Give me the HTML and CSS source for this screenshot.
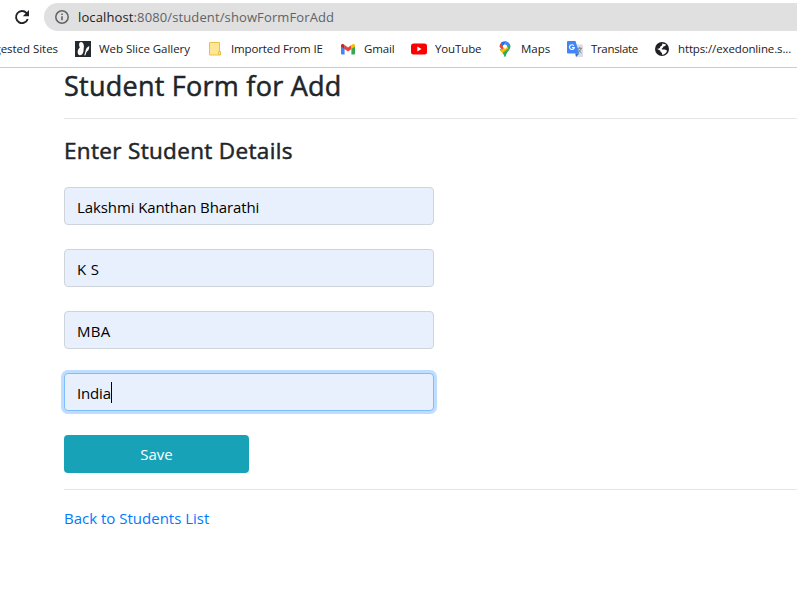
FILE: index.html
```html
<!DOCTYPE html>
<html lang="en">
<head>
<meta charset="utf-8">
<title>Student Form</title>
<link rel="stylesheet" href="styles.css">
</head>
<body>
<header class="browser">
  <div class="toolbar">
    <svg class="reload" viewBox="0 0 16 16"><path d="M13.700 10A6 6 0 1 1 12.600 4.200" fill="none" stroke="#202124" stroke-width="1.900"/><path d="M15 1v6.200H8.800z" fill="#202124"/></svg>
    <div class="address">
      <svg class="info" viewBox="0 0 16 16"><circle cx="8" cy="8" r="6.200" fill="none" stroke="#5f6368" stroke-width="1.500"/><path d="M8 7.200v4M8 4.500v1.600" stroke="#5f6368" stroke-width="1.600"/></svg>
      <span class="url"><span class="host">localhost</span>:8080/student/showFormForAdd</span>
    </div>
  </div>
  <nav class="bookmarks">
    <div class="bookmark clipped"><span>gested Sites</span></div>
    <div class="bookmark">
      <svg viewBox="0 0 16 16"><path fill="#24292d" d="M0 0h16v16H0z"/><path fill="#fff" d="M6 1C4 1 3.600 4 4.800 6.500 2 9 2 13.500 4.500 14.200c2.800.4 4.300-2.700 4.100-6.200C9.500 5 8.700 1.200 6 1zM14.200 5c-2.200 1-3.400 2.800-3.800 5.500L9.300 14.300l1 .2 1.200-3.500C13.500 9.700 14.600 7.500 14.200 5z"/></svg>
      <span>Web Slice Gallery</span>
    </div>
    <div class="bookmark">
      <svg viewBox="0 0 16 16"><path fill="#ffe694" stroke="#e8c34a" d="M2.500 1.500h10v8.500l1 1v3h-11z"/><path fill="#ffe694" stroke="#e8c34a" d="M11.500 10.500h2v3h-2z"/></svg>
      <span class="tight">Imported From IE</span>
    </div>
    <div class="bookmark">
      <svg viewBox="0 0 16 16"><path fill="#4285f4" d="M1 5l3.600 2.300v6.200H2a1 1 0 0 1-1-1z"/><path fill="#34a853" d="M15 5l-3.600 2.300v6.200H14a1 1 0 0 0 1-1z"/><path fill="#ea4335" d="M4.600 4L8 6.500 11.400 4v4L8 10.500 4.600 8z"/><path fill="#c5221f" d="M1 4.700C1 2.900 2.900 2.600 4.600 4v4L1 5.500z"/><path fill="#fbbc04" d="M15 4.700c0-1.800-1.900-2.100-3.600-.7v4L15 5.500z"/></svg>
      <span class="tight">Gmail</span>
    </div>
    <div class="bookmark">
      <svg viewBox="0 0 16 16"><rect y="2.500" width="16" height="11" rx="2.500" fill="#f00"/><path d="M6.300 5.600v4.800L10.500 8z" fill="#fff"/></svg>
      <span class="tight">YouTube</span>
    </div>
    <div class="bookmark">
      <svg viewBox="0 0 16 16"><path fill="#34a853" d="M2.700 8.500L12.900 3c1 2 .7 4.200-.8 6C10 11.500 9.200 13 8.700 15.300c-.2.900-1.200.9-1.400 0C6.800 12.500 4.500 11 2.700 8.500z"/><path fill="#fbbc04" d="M3 9l7.500-5 .8 3.600L5.500 12z"/><path fill="#ea4335" d="M3.700 2.200L8 6 5 8.500 2.500 5.800c0-1.300.4-2.600 1.200-3.600z"/><path fill="#1a73e8" d="M3.700 2.200C5 .6 7.400-.1 9.600.6L6 5z"/><path fill="#4285f4" d="M9.600.6c1.500.4 2.600 1.300 3.300 2.700L9.500 7 7 4z"/><circle cx="8" cy="5.600" r="2.100" fill="#fff"/></svg>
      <span>Maps</span>
    </div>
    <div class="bookmark">
      <svg viewBox="0 0 16 16"><path fill="#dadce0" d="M6 3.500h9a1 1 0 0 1 1 1V15a1 1 0 0 1-1 1H9z"/><path fill="#4285f4" d="M1 0h7.500l3.800 12.500H1a1 1 0 0 1-1-1V1a1 1 0 0 1 1-1z"/><path fill="#3367d6" d="M8.300 12.500h4L9 16z"/><path d="M6.800 4.600a2.400 2.400 0 1 0 .5 2H5" fill="none" stroke="#fff" stroke-width="1.100"/><path d="M10.500 7.300H15M12.700 6v1.300M14 7.500c-.4 2-1.600 3.200-2.500 4M11.500 8.500c.7 1.500 1.800 2.500 3 3.500" fill="none" stroke="#73808c" stroke-width=".9"/></svg>
      <span class="tighter">Translate</span>
    </div>
    <div class="bookmark">
      <svg viewBox="0 0 16 16"><circle cx="8" cy="8" r="7" fill="#202124"/><path fill="#fff" d="M8.300 2.500l3.700 1c-.3 1.600-1.500 1.600-2.500 2-.7.400-.3 1.600-1.300 1.800-.8.200-.6 1.300.4 1.200h2.200c1 0 1 1.200 2.300 1C12.600 12 10.400 13.700 8 13.700v-2c-1.300 0-1.600-1-1.600-1.900L2.400 7.500C2.700 8 4 7.800 5 7.500c1.500-.3.800-1.700 1.700-2.200.9-.4 1.600-.8 1.600-2.800z"/></svg>
      <span class="tight">https://exedonline.s...</span>
    </div>
  </nav>
</header>
<main class="container">
  <h3>Student Form for Add</h3>
  <hr>
  <h4>Enter Student Details</h4>
  <form>
    <input class="field name" type="text" value="Lakshmi Kanthan Bharathi">
    <input class="field initials" type="text" value="K S">
    <input class="field initials" type="text" value="MBA">
    <div class="field focused"><span>India</span><i class="caret"></i></div>
    <button class="save" type="button">Save</button>
  </form>
  <hr>
  <a class="back" href="#">Back to Students List</a>
</main>
</body>
</html>
```

FILE: styles.css
```css
* { box-sizing: border-box; }
body {
  margin: 0;
  height: 607px;
  overflow: hidden;
  background: #fff;
  color: #212529;
  font: 15px/24px "Open Sans", "Noto Sans", sans-serif;
}
.browser { height: 68px; padding-top: 3px; border-bottom: 1px solid #ccc; }
.toolbar { display: flex; align-items: center; height: 28px; padding-left: 14px; }
.reload { width: 16px; height: 16px; margin-right: 14px; }
.address {
  flex: 1;
  display: flex;
  align-items: center;
  height: 28px;
  padding-left: 10px;
  border-radius: 14px 0 0 14px;
  background: #e0e0e0;
}
.info { width: 16px; height: 16px; margin-right: 8px; }
.url { font-size: 13px; letter-spacing: .12px; color: #5f6368; white-space: nowrap; }
.host { color: #202124; }
.bookmarks {
  display: grid;
  grid-template-columns: 75px 132px 133px 71px 86px 70px 87px 1fr;
  height: 36px;
}
.bookmark {
  display: flex;
  align-items: center;
  gap: 8px;
  font-size: 11.500px;
  letter-spacing: -.04px;
  color: #202124;
  white-space: nowrap;
}
.tight { letter-spacing: -.13px; }
.tighter { letter-spacing: -.33px; }
.bookmark svg { flex: none; width: 16px; height: 16px; }
.clipped { justify-content: flex-end; padding-right: 17px; }
.container { padding-left: 64px; }
h3, h4 { margin: 0; font-weight: 400; white-space: nowrap; -webkit-text-stroke: .5px #212529; }
h3 { height: 50px; font-size: 27px; line-height: 35px; letter-spacing: .25px; }
h4 { height: 68px; font-size: 22.500px; line-height: 30px; padding-top: 17px; letter-spacing: .33px; }
hr { margin: 0; border: 0; border-top: 1px solid #e5e5e5; }
form { display: flex; flex-direction: column; gap: 24px; padding-bottom: 16px; }
.field {
  display: flex;
  align-items: center;
  width: 370px;
  height: 38px;
  padding: 2px 12px 0;
  border: 1px solid #ced4da;
  border-radius: 4px;
  background: #e8f0fe;
  color: #000;
  font: inherit;
}
.name { letter-spacing: -.1px; }
.initials { letter-spacing: .3px; }
.focused { border-color: #80bdff; box-shadow: 0 0 0 3px #bfdeff; letter-spacing: -.15px; }
.caret { width: 1px; height: 21px; margin-top: -2px; background: #000; }
.save {
  width: 185px;
  height: 38px;
  padding: 0;
  border: 0;
  border-radius: 4px;
  background: #17a2b8;
  color: #fff;
  font: inherit;
}
.back { display: block; padding-top: 16px; color: #007bff; text-decoration: none; }
```
